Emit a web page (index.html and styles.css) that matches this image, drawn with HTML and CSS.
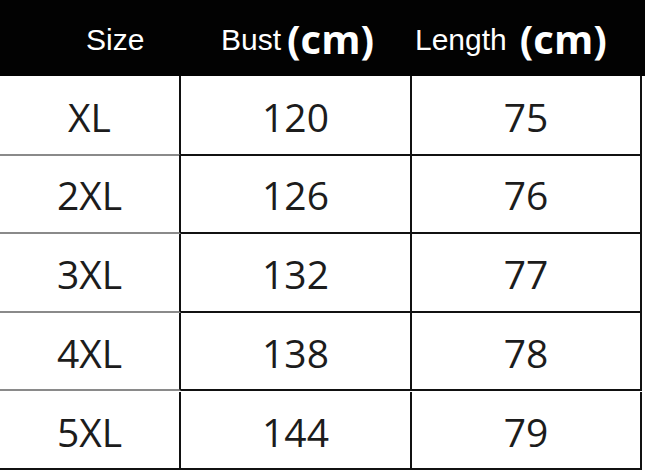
FILE: index.html
```html
<!DOCTYPE html>
<html>
<head>
<meta charset="utf-8">
<link rel="stylesheet" href="styles.css">
</head>
<body>
<div class="chart">
  <div class="head">
    <div class="h h1">Size</div>
    <div class="h h2">Bust<span class="cm">(cm)</span></div>
    <div class="h h3">Length<span class="cm cm2">(cm)</span></div>
  </div>
  <div class="grid">
    <div class="c c1 r1">XL</div><div class="c c2 r1">120</div><div class="c c3 r1">75</div>
    <div class="c c1">2XL</div><div class="c c2">126</div><div class="c c3">76</div>
    <div class="c c1">3XL</div><div class="c c2">132</div><div class="c c3">77</div>
    <div class="c c1 r4">4XL</div><div class="c c2 r4">138</div><div class="c c3 r4">78</div>
    <div class="c c1 r5 last">5XL</div><div class="c c2 r5">144</div><div class="c c3 r5">79</div>
  </div>
</div>
</body>
</html>
```
FILE: styles.css
```css
html, body {
  margin: 0;
  padding: 0;
  background: #ffffff;
}
.chart {
  width: 645px;
  height: 475px;
  overflow: hidden;
  background: #ffffff;
}
.head {
  height: 76px;
  background: #020202;
  display: flex;
  align-items: center;
  color: #ffffff;
  font-family: "Liberation Sans", Arial, sans-serif;
  font-size: 30px;
}
.h {
  display: flex;
  align-items: center;
  padding-top: 4px;
}
.h1 { margin-left: 86px; width: 135px; }
.h2 { width: 194px; }
.cm {
  font-family: "Open Sans", "Noto Sans", sans-serif;
  font-weight: 700;
  font-size: 40px;
  margin-left: 6px;
  margin-top: -4px;
}
.cm2 { margin-left: 13px; }
.grid {
  display: grid;
  grid-template-columns: 181px 231px 230px;
  grid-auto-rows: 79px;
}
.c {
  box-sizing: border-box;
  border-bottom: 2px solid #111;
  border-right: 2px solid #111;
  display: flex;
  align-items: center;
  justify-content: center;
  font-family: "Open Sans", "Noto Sans", sans-serif;
  font-size: 39px;
  color: #1c1c1c;
  padding-top: 2px;
}
.c1 { border-bottom-color: #8a8a8a; }
.c1.last { border-bottom-color: #111; }
.r1 { height: 80px; }
.r4, .r5 { height: 78px; }
```
